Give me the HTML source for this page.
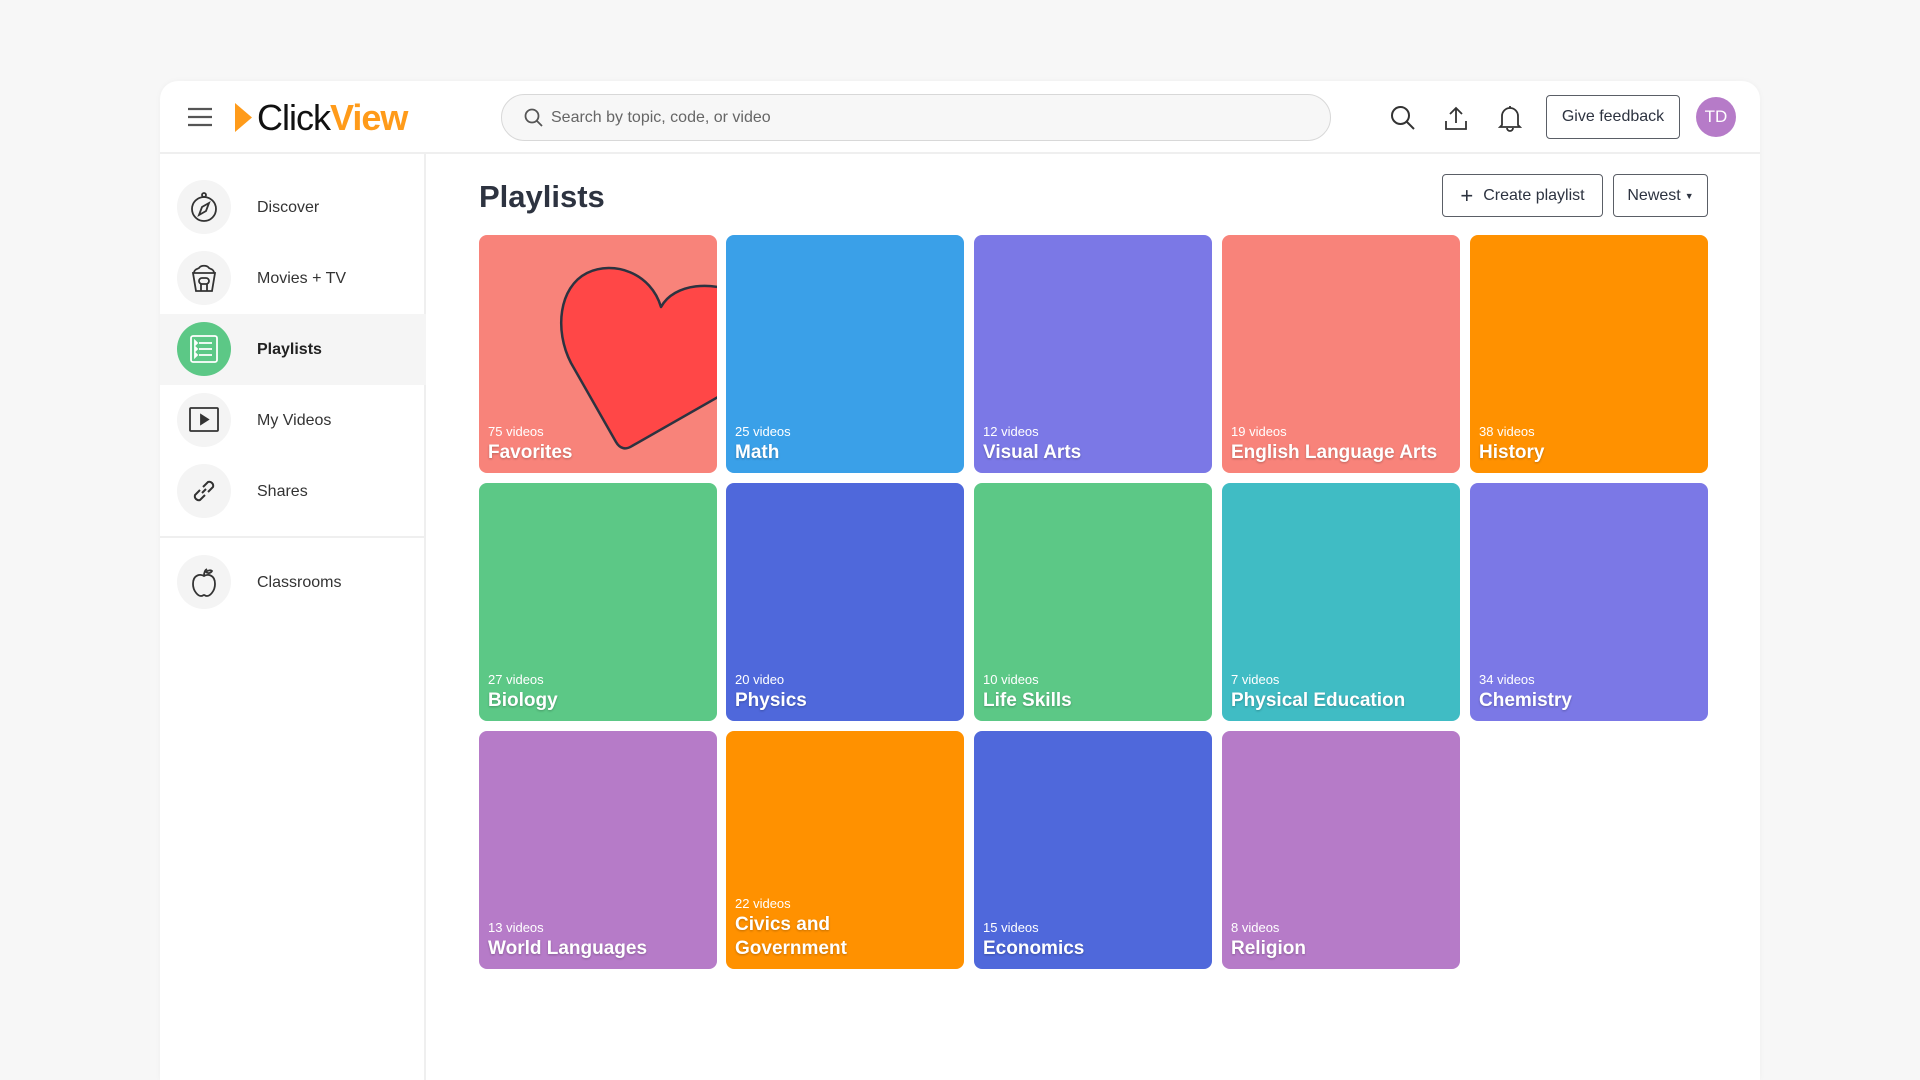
<!DOCTYPE html>
<html style="overflow:hidden;width:1920px;height:1080px"><head><meta charset="utf-8"><style>
*{box-sizing:border-box;margin:0;padding:0}
body{width:1920px;height:1080px;background:#f7f7f7;font-family:"Liberation Sans",sans-serif;color:#2d3340;overflow:hidden;position:relative}
.app{position:absolute;left:160px;top:81px;width:1600px;height:999px;background:#fff;border-radius:18px 18px 0 0;box-shadow:0 0 6px rgba(0,0,0,.04);overflow:hidden}
.hdr{position:absolute;left:0;top:0;width:1600px;height:73px;border-bottom:2px solid #efefef}
.side{position:absolute;left:0;top:73px;width:266px;height:926px;border-right:2px solid #efefef}
.item{position:absolute;left:0;width:266px;height:71px}
.item .ic{position:absolute;left:17px;top:8px;width:54px;height:54px;border-radius:50%;background:#f4f4f4;display:flex;align-items:center;justify-content:center}
.item .lb{position:absolute;left:97px;top:0;line-height:71px;font-size:16px;color:#333}
.card{position:absolute;width:238px;height:238px;border-radius:8px;overflow:hidden;color:#fff}
.card .n{position:absolute;left:9px;bottom:34px;font-size:13px}
.card .t{position:absolute;left:9px;bottom:8px;font-size:19px;font-weight:bold;text-shadow:0 1px 2px rgba(0,0,0,.25);line-height:24px}
.btn{position:absolute;border:1.5px solid #5a5e66;border-radius:4px;background:#fff;font-size:16px;color:#2d3340;display:flex;align-items:center;justify-content:center}
</style></head><body>
<div class="app">
 <div class="hdr">
  <svg style="position:absolute;left:27px;top:26px" width="26" height="20"><g stroke="#555" stroke-width="2.2"><line x1="1" y1="2" x2="25" y2="2"/><line x1="1" y1="10" x2="25" y2="10"/><line x1="1" y1="18" x2="25" y2="18"/></g></svg>
  <svg style="position:absolute;left:75px;top:22px" width="18" height="29"><polygon points="0,0 17,14.5 0,29" fill="#ff9b1a"/></svg>
  <div style="position:absolute;left:97px;top:15px;font-size:36px;letter-spacing:-1px;line-height:44px"><span style="color:#111">Click</span><span style="color:#ff9b1a;font-weight:bold">View</span></div>
  <div style="position:absolute;left:341px;top:13px;width:830px;height:47px;border:1.5px solid #d8d8d8;border-radius:24px;background:#f7f7f7">
   <svg style="position:absolute;left:22px;top:13px" width="20" height="20"><circle cx="8" cy="8" r="6.5" fill="none" stroke="#555" stroke-width="1.8"/><line x1="13" y1="13" x2="18" y2="18" stroke="#555" stroke-width="1.8"/></svg>
   <span style="position:absolute;left:49px;top:14px;font-size:16px;color:#666">Search by topic, code, or video</span>
  </div>
  <svg style="position:absolute;left:1230px;top:24px" width="26" height="26"><circle cx="10.5" cy="10.5" r="8.5" fill="none" stroke="#333" stroke-width="2"/><line x1="17" y1="17" x2="24" y2="24" stroke="#333" stroke-width="2"/></svg>
  <svg style="position:absolute;left:1284px;top:24px" width="24" height="26" fill="none" stroke="#333" stroke-width="1.8"><path d="M12 18V3M6 9l6-6 6 6M2 16v8h20v-8"/></svg>
  <svg style="position:absolute;left:1338px;top:23px" width="24" height="28" fill="none" stroke="#333" stroke-width="1.8"><path d="M4 21V12a8 8 0 0 1 16 0v9l2 2H2zM12 2v2M9 24a3 3 0 0 0 6 0"/></svg>
  <div class="btn" style="left:1386px;top:14px;width:134px;height:44px">Give feedback</div>
  <div style="position:absolute;left:1536px;top:16px;width:40px;height:40px;border-radius:50%;background:#b67bc8;color:#fff;font-size:17px;display:flex;align-items:center;justify-content:center">TD</div>
 </div>
 <div class="side">
  <div class="item" style="top:18px"><div class="ic"><svg width="30" height="32" fill="none" stroke="#333" stroke-width="1.8"><circle cx="15" cy="18" r="12"/><circle cx="15" cy="4" r="2"/><path d="M20 12l-3 8-7 4 3-8z"/></svg></div><div class="lb">Discover</div></div>
  <div class="item" style="top:89px"><div class="ic"><svg width="28" height="30" fill="none" stroke="#333" stroke-width="1.8"><path d="M4 10c0-4 4-4 5-5 2-3 8-3 10 0 1 1 5 1 5 5zM3 10h22l-3 18H6z"/><rect x="9" y="15" width="10" height="6" rx="3"/><path d="M11 21v7M17 21v7"/></svg></div><div class="lb">Movies + TV</div></div>
  <div class="item" style="top:160px;background:#f5f5f5"><div class="ic" style="background:#5cc886"><svg width="30" height="30" fill="none" stroke="#fff" stroke-width="1.8"><rect x="2" y="2" width="26" height="26" rx="2"/><path d="M10 9h13M10 15h13M10 21h13"/><path d="M6 7v4l2-2zM6 13v4l2-2zM6 19v4l2-2z" fill="#fff"/></svg></div><div class="lb" style="font-weight:bold;color:#222">Playlists</div></div>
  <div class="item" style="top:231px"><div class="ic"><svg width="30" height="26" fill="none" stroke="#333" stroke-width="1.8"><rect x="1" y="1" width="28" height="23" rx="1"/><path d="M12 8v9l7-4.5z" fill="#333"/></svg></div><div class="lb">My Videos</div></div>
  <div class="item" style="top:302px"><div class="ic"><svg width="30" height="30" fill="none" stroke="#333" stroke-width="2"><path d="M13 17l4-4M11 14l-5 5a4 4 0 0 0 5 5l5-5M19 16l5-5a4 4 0 0 0-5-5l-5 5"/></svg></div><div class="lb">Shares</div></div>
  <div style="position:absolute;left:0;top:382px;width:266px;height:2px;background:#efefef"></div>
  <div class="item" style="top:393px"><div class="ic"><svg width="28" height="32" fill="none" stroke="#333" stroke-width="1.8"><path d="M14 10c-3-2-11-2-11 8 0 7 5 12 8 12 2 0 2-1 3-1s1 1 3 1c3 0 8-5 8-12 0-10-8-10-11-8zM14 10c0-3 1-6 3-7M16 6c2-2 5-2 6-1-1 2-4 3-6 1z"/></svg></div><div class="lb">Classrooms</div></div>
 </div>
 <div style="position:absolute;left:319px;top:98px;font-size:31px;font-weight:bold;color:#2d3340">Playlists</div>
 <div class="btn" style="left:1282px;top:93px;width:161px;height:43px"><span style="font-size:22px;margin-right:10px">+</span>Create playlist</div>
 <div class="btn" style="left:1453px;top:93px;width:95px;height:43px">Newest<span style="font-size:9px;margin-left:4px">▼</span></div>
</div>
<div class="card" style="left:479px;top:235px;background:#f8837a"><svg style="position:absolute;left:0;top:0" width="238" height="238"><path d="M182 72C172 38 135 25 108 38 80 52 75 95 92 128L137 207C141 214 147 215 153 211L260 150 262 60C235 45 195 48 182 72Z" fill="#ff4747" stroke="#2d3340" stroke-width="2.5" stroke-linejoin="round"/></svg><div class="n">75 videos</div><div class="t">Favorites</div></div>
<div class="card" style="left:726px;top:235px;background:#3aa0e8"><div class="n">25 videos</div><div class="t">Math</div></div>
<div class="card" style="left:974px;top:235px;background:#7b78e6"><div class="n">12 videos</div><div class="t">Visual Arts</div></div>
<div class="card" style="left:1222px;top:235px;background:#f8837a"><div class="n">19 videos</div><div class="t">English Language Arts</div></div>
<div class="card" style="left:1470px;top:235px;background:#ff9100"><div class="n">38 videos</div><div class="t">History</div></div>
<div class="card" style="left:479px;top:483px;background:#5cc886"><div class="n">27 videos</div><div class="t">Biology</div></div>
<div class="card" style="left:726px;top:483px;background:#4f68db"><div class="n">20 video</div><div class="t">Physics</div></div>
<div class="card" style="left:974px;top:483px;background:#5cc886"><div class="n">10 videos</div><div class="t">Life Skills</div></div>
<div class="card" style="left:1222px;top:483px;background:#40bcc4"><div class="n">7 videos</div><div class="t">Physical Education</div></div>
<div class="card" style="left:1470px;top:483px;background:#7b78e6"><div class="n">34 videos</div><div class="t">Chemistry</div></div>
<div class="card" style="left:479px;top:731px;background:#b67bc8"><div class="n">13 videos</div><div class="t">World Languages</div></div>
<div class="card" style="left:726px;top:731px;background:#ff9100"><div class="n" style="bottom:58px">22 videos</div><div class="t">Civics and<br>Government</div></div>
<div class="card" style="left:974px;top:731px;background:#4f68db"><div class="n">15 videos</div><div class="t">Economics</div></div>
<div class="card" style="left:1222px;top:731px;background:#b67bc8"><div class="n">8 videos</div><div class="t">Religion</div></div>
</body></html>
